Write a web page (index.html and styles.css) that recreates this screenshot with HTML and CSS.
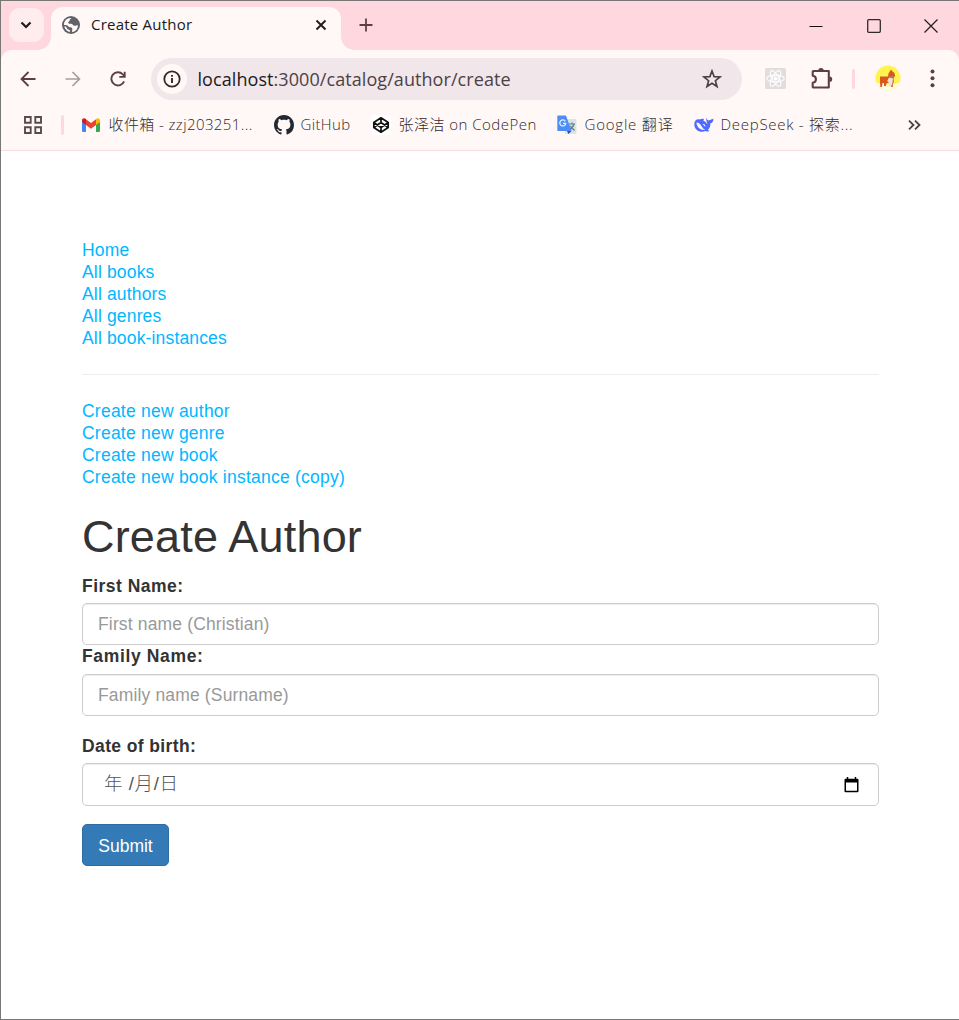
FILE: index.html
```html
<!DOCTYPE html>
<html lang="zh-CN">
<head>
<meta charset="utf-8">
<title>Create Author</title>
<link rel="stylesheet" href="styles.css">
</head>
<body>
<div class="window">
  <header class="tabstrip">
    <div class="tab-search"><svg width="12" height="8" viewBox="0 0 12 8"><path d="M1.500 1.500 6 6l4.500-4.500" fill="none" stroke="#201a1b" stroke-width="2.200"/></svg></div>
    <div class="tab">
      <svg class="favicon" width="18" height="18" viewBox="0 0 18 18"><circle cx="9" cy="9" r="9" fill="#5f6368"/><path d="M9.500 2c-2 1-1.500 3-3 4-1 .8.500 2 2 1.800 1.500-.3 2 .7 3 1.600 1 .8 2.800.3 4.300-.4.300 4-2.300 6.800-5.800 7-.3-1.500.8-2.500.2-3.700-.8-1.300-3-.5-4-2C5.300 8.800 3.200 9 2 9c-.2-4 3-7.500 7.500-7z" fill="#fff8f6"/><path d="M3 10.500c1 3 2.500 4 5 4.800" fill="none" stroke="#fff8f6" stroke-width="1.500"/></svg>
      <span class="tab-title">Create Author</span>
      <svg class="tab-close" width="12" height="12" viewBox="0 0 12 12"><path d="m1.500 1.500 9 9m0-9-9 9" stroke="#201a1b" stroke-width="1.900"/></svg>
    </div>
    <svg class="new-tab" width="14" height="14" viewBox="0 0 14 14"><path d="M7 .5v13M.5 7h13" stroke="#5c3f44" stroke-width="1.800"/></svg>
    <div class="controls">
      <svg width="14" height="14" viewBox="0 0 14 14"><path d="M.5 7.500h13" stroke="#111"/></svg>
      <svg width="14" height="14" viewBox="0 0 14 14"><rect x=".7" y=".7" width="12.600" height="12.600" rx="1" fill="none" stroke="#33292b" stroke-width="1.300"/></svg>
      <svg width="14" height="14" viewBox="0 0 14 14"><path d="m.5.500 13 13m0-13-13 13" stroke="#221c1d" stroke-width="1.200"/></svg>
    </div>
  </header>
  <div class="chrome">
    <div class="toolbar">
      <svg class="nav" width="16" height="16" viewBox="0 0 16 16"><path d="M15.500 8H2M8.500 1 1.500 8l7 7" fill="none" stroke="#5c3f44" stroke-width="1.800"/></svg>
      <svg class="nav" width="16" height="16" viewBox="0 0 16 16"><path d="M.5 8H14M7.500 1l7 7-7 7" fill="none" stroke="#a99a9c" stroke-width="1.600"/></svg>
      <svg class="nav" width="16" height="16" viewBox="0 0 16 16"><path d="M14.100 10.300A6.600 6.600 0 1 1 12.800 3.300L14.500 5" fill="none" stroke="#5c3f44" stroke-width="1.900"/><path d="M14.700.7v5.200H9.300" fill="none" stroke="#5c3f44" stroke-width="1.900"/></svg>
      <div class="omnibox">
        <div class="site-info"><svg width="18" height="18" viewBox="0 0 18 18"><circle cx="9" cy="9" r="7.700" fill="none" stroke="#33292b" stroke-width="1.800"/><path d="M9 8v5M9 5v1.800" stroke="#33292b" stroke-width="1.900"/></svg></div>
        <span class="url"><b>localhost</b>:3000/catalog/author/create</span>
        <svg width="20" height="20" viewBox="0 0 20 20"><path d="m10 2 2.100 5.600 6 .3-4.700 3.800 1.600 5.800L10 14.200l-5 3.300 1.600-5.800-4.700-3.800 6-.3z" fill="none" stroke="#4c4145" stroke-width="1.700"/></svg>
      </div>
      <svg class="react" width="21" height="21" viewBox="0 0 21 21"><rect width="21" height="21" rx="1.500" fill="#e1dddc"/><g fill="none" stroke="#fff" stroke-width="1.100"><ellipse cx="10.500" cy="10.500" rx="8.800" ry="3.400"/><ellipse cx="10.500" cy="10.500" rx="8.800" ry="3.400" transform="rotate(60 10.500 10.500)"/><ellipse cx="10.500" cy="10.500" rx="8.800" ry="3.400" transform="rotate(120 10.500 10.500)"/></g><circle cx="10.500" cy="10.500" r="2" fill="#fff"/></svg>
      <svg class="puzzle" width="22" height="22" viewBox="0 0 22 22"><path d="M2.500 3h15.300v16.500H2.500q-.8 0-.8-.8v-3.900c4.300-.5 4.300-6.600 0-7V3.800q0-.8.800-.8z" fill="none" stroke="#5c3f44" stroke-width="2.100" stroke-linejoin="round"/><path d="M7.300 2.500a2.700 2.500 0 0 1 5.400 0zM18.500 8.500a2.700 2.700 0 0 1 0 5.400z" fill="#5c3f44"/></svg>
      <i class="divider"></i>
      <svg class="avatar" width="26" height="26" viewBox="0 0 26 26"><defs><clipPath id="disc"><circle cx="13" cy="13" r="12.500"/></clipPath></defs><g clip-path="url(#disc)"><path d="M0 0h26v26H0z" fill="#fff34f"/><path d="M0 17q13 5 26 0v9H0z" fill="#fffbdc"/></g><path d="M5 11.500h8l.5-3L16 4.500l1.500 2L19.500 8l.5 3-1.500 2 .3 4-1 2v3h-1.600v-4h-4.500l-1 3H9v-3H7.500L7 22H5.400L5 17z" fill="#d8571f"/><path d="m14 12.500 4 1-.5 4.500-2 4h-1.800l.3-4-1.800-2z" fill="#eee2d2"/><path d="M14 12h4.500" stroke="#a8886e" stroke-width="1.500"/></svg>
      <svg class="menu" width="5" height="19" viewBox="0 0 5 19" fill="#5c3f44"><circle cx="2.500" cy="2.500" r="2"/><circle cx="2.500" cy="9.300" r="2"/><circle cx="2.500" cy="16.200" r="2"/></svg>
    </div>
    <nav class="bookmarks">
      <svg class="apps" width="18" height="18" viewBox="0 0 18 18" fill="none" stroke="#5a4a4c" stroke-width="1.900"><path d="M1 1h5.700v5.700H1zM11.300 1H17v5.700h-5.700zM1 11.300h5.700V17H1zM11.300 11.300H17V17h-5.700z"/></svg>
      <i class="divider"></i>
      <a class="bm gmail"><svg width="18" height="14" viewBox="0 0 18 14"><path d="M0 2h4v12H1.200Q0 14 0 12.800z" fill="#4285f4"/><path d="M14 2h4v10.800q0 1.200-1.200 1.200H14z" fill="#34a853"/><path d="M4 1.200 9 5l5-3.800V7L9 10.700 4 7z" fill="#ea4335"/><path d="M0 2.300C0 .2 2.200-.6 4 1v6L0 4z" fill="#c5221f"/><path d="M18 2.300C18 .2 15.800-.6 14 1v6l4-3z" fill="#fbbc04"/></svg><span>收件箱 - zzj203251...</span></a>
      <a class="bm github"><svg width="20" height="20" viewBox="0 0 16 16"><path fill="#24292f" d="M8 0C3.580 0 0 3.580 0 8c0 3.540 2.290 6.530 5.470 7.590.4.070.55-.17.55-.38 0-.19-.01-.82-.01-1.490-2.010.37-2.530-.49-2.690-.94-.09-.23-.48-.94-.82-1.130-.28-.15-.68-.52-.01-.53.63-.01 1.080.58 1.230.82.72 1.210 1.870.87 2.330.66.07-.52.28-.87.51-1.070-1.780-.2-3.640-.89-3.640-3.950 0-.87.31-1.590.82-2.150-.08-.2-.36-1.020.08-2.120 0 0 .67-.21 2.200.82.640-.18 1.320-.27 2-.27s1.360.09 2 .27c1.530-1.040 2.200-.82 2.200-.82.440 1.100.16 1.920.08 2.120.51.560.82 1.270.82 2.150 0 3.070-1.870 3.750-3.650 3.950.29.250.54.730.54 1.480 0 1.070-.01 1.930-.01 2.200 0 .21.15.46.55.38A8.010 8.010 0 0 0 16 8c0-4.420-3.580-8-8-8z"/></svg><span>GitHub</span></a>
      <a class="bm codepen"><svg width="20" height="20" viewBox="0 0 20 20"><path d="M0 0h20v20H0z" fill="#fff"/><path d="m10 2.800 7.200 4.700v5L10 17.200l-7.200-4.700v-5zM10 3v4.500M10 12.500V17M2.800 7.500l7.200 5 7.200-5M2.800 12.500l7.200-5 7.200 5" fill="none" stroke="#111" stroke-width="1.700" stroke-linejoin="round"/></svg><span>张泽洁 on CodePen</span></a>
      <a class="bm translate"><svg width="20" height="20" viewBox="0 0 20 20"><rect x="8" y="4" width="11.500" height="15" rx="1" fill="#dce3e3"/><path d="M12 9h6M15 7.500V9m2 0q-1 4-5 6m1-4 4.500 4.500" fill="none" stroke="#607d8b" stroke-width="1.200"/><path d="M1.200.5H9L14.500 16H1.200Q.3 16 .3 15V1.500Q.3.500 1.200.500z" fill="#4c8df6"/><path d="M10 16h4.500L11.500 19z" fill="#3048b8"/><path d="M8.300 6.300A3 3 0 1 0 8.600 9V8.400H6" fill="none" stroke="#e9f1ff" stroke-width="1.300"/></svg><span>Google 翻译</span></a>
      <a class="bm deepseek"><svg width="20" height="16" viewBox="0 0 20 16"><path d="M12.500.5c.3 2 1 2.700 2.300 3 .8-1 2.500-.6 4.600-1.700.2 2.800-1.400 4.400-3 4.500.2 3.200-1 5.200-2.500 6.500l1.300 1.200c-1.500.8-2.900.5-3.700.1C6.500 16 .3 13.500.3 7.200.3 3 3.300 1.500 6 2.500c1.500-.9 2.500-1 4-.4L9.300 3.400c1.600.8 3 2.200 4.200 3.900-.5-2.200-1.800-3.800-1-6.800z" fill="#4d6bfe"/><path d="M2.500 5.500c4.800 0 5 6.500 8.800 7-4.200 1.600-8.800-2.300-8.800-7zM8.500 7.200c1.500-1 3 .5 2.900 2.300-1.200-.2-1.500-1.700-2.900-2.300z" fill="#fff8f6"/></svg><span>DeepSeek - 探索...</span></a>
      <svg class="more" width="13" height="10" viewBox="0 0 13 10"><path d="m1 .7 4.500 4.300L1 9.300M7 .7l4.500 4.300L7 9.300" fill="none" stroke="#4c4145" stroke-width="1.800"/></svg>
    </nav>
  </div>
  <main class="page">
    <ul class="links"><li><a>Home</a></li><li><a>All books</a></li><li><a>All authors</a></li><li><a>All genres</a></li><li><a>All book-instances</a></li></ul>
    <hr>
    <ul class="links create"><li><a>Create new author</a></li><li><a>Create new genre</a></li><li><a>Create new book</a></li><li><a>Create new book instance (copy)</a></li></ul>
    <h1>Create Author</h1>
    <form>
      <label>First Name:</label>
      <input class="field" type="text" placeholder="First name (Christian)">
      <label class="family">Family Name:</label>
      <input class="field" type="text" placeholder="Family name (Surname)">
      <label class="birth">Date of birth:</label>
      <div class="field date"><span>年 /月/日</span><svg width="15" height="16" viewBox="0 0 15 16"><path d="M1.500 1.700h12q1 0 1 1v11.600q0 1-1 1h-12q-1 0-1-1V2.700q0-1 1-1zM2 5.500v8.300h11V5.500z" fill="#000" fill-rule="evenodd"/><path d="M3.500 0v2M11.500 0v2" stroke="#000" stroke-width="1.500"/></svg></div>
      <button type="button">Submit</button>
    </form>
  </main>
</div>
</body>
</html>
```
FILE: styles.css
```css
* { box-sizing: border-box; }
body { margin: 0; background: #fff; }
svg { display: block; flex: none; }
.window {
  width: 959px; height: 1020px; overflow: hidden;
  display: flex; flex-direction: column;
  border: 1px solid #777; border-right: 0;
}
.tabstrip { height: 49px; flex: none; display: flex; background: #ffd8df; }
.tab-search {
  width: 35px; height: 34px; margin: 7px 7px 0 8px; padding-right: 1px; border-radius: 11px;
  display: flex; align-items: center; justify-content: center; background: #ffecef;
}
.tab {
  position: relative; width: 290px; height: 43px; margin-top: 6px; padding: 0 14px 7px 11px;
  display: flex; align-items: center; background: #fff8f6; border-radius: 12px 12px 0 0;
}
.tab::before, .tab::after { content: ""; position: absolute; bottom: 0; width: 13px; height: 13px; }
.tab::before { left: -13px; background: radial-gradient(circle at 0 0, transparent 12.500px, #fff8f6 13px); }
.tab::after { right: -13px; background: radial-gradient(circle at 100% 0, transparent 12.500px, #fff8f6 13px); }
.tab-title { flex: 1; margin-left: 11px; padding-bottom: 2px; font: 15px/20px "Open Sans", "Noto Sans", sans-serif; letter-spacing: .22px; color: #201a1b; }
.new-tab { margin: 17px 0 0 18px; }
.controls { display: flex; gap: 43.500px; margin: 18px 21px 0 auto; width: 129px; }
.chrome { height: 101px; flex: none; background: linear-gradient(#ffd8df, #ffd8df) top / 100% 14px no-repeat; }
.toolbar {
  height: 57px; display: flex; align-items: center; padding-left: 19px;
  background: #fff8f6; border-radius: 11px 11px 0 0;
}
.nav { margin-right: 29px; }
.omnibox {
  width: 591px; height: 42px; margin-left: -4px; padding: 0 20px 0 6px;
  display: flex; align-items: center; border-radius: 21px; background: #f1e6ea;
}
.site-info { width: 30px; height: 30px; display: flex; align-items: center; justify-content: center; border-radius: 50%; background: #fff8f6; }
.url { flex: 1; margin-left: 10.500px; white-space: nowrap; font: 18px/24px "Open Sans", "Noto Sans", sans-serif; letter-spacing: .07px; color: #4c4145; }
.url b { font-weight: 400; color: #201a1b; }
.react { margin-left: 23px; }
.puzzle { margin-left: 25px; }
.divider { width: 3px; height: 20px; border-radius: 2px; background: #ffd8df; }
.toolbar .divider { margin-left: 19px; }
.avatar { margin-left: 20px; margin-bottom: 2px; }
.menu { margin-left: 29px; }
.bookmarks { height: 44px; display: flex; align-items: center; padding: 0 0 8px 22.500px; background: #fff8f6; border-bottom: 1px solid #f8dde0; }
.bookmarks .divider { margin: 0 18px 0 19px; }
.bm { display: flex; align-items: center; gap: 8px; white-space: nowrap; font: 15px/20px "Open Sans", "Noto Sans CJK SC", sans-serif; font-weight: 300; color: #33292b; }
.bm span { padding-bottom: 2px; }
.gmail { width: 192px; gap: 9px; letter-spacing: .4px; }
.github { width: 97px; gap: 7px; letter-spacing: .35px; }
.codepen { width: 186px; letter-spacing: .48px; }
.translate { width: 137px; letter-spacing: .8px; }
.deepseek { width: 214px; gap: 7px; letter-spacing: .72px; }
.page { padding: 88px 80px 0 81px; font: 17.500px/22px "Liberation Sans", Arial, sans-serif; color: #333; }
.links { list-style: none; margin: 0; padding: 0; color: #00b7ff; letter-spacing: .16px; }
.create { letter-spacing: .23px; }
hr { margin: 25px 0; border: 0; border-top: 1px solid #eee; }
h1 { margin: 24px 0 13px; font-size: 45px; line-height: 50px; font-weight: 400; letter-spacing: .18px; }
form { display: flex; flex-direction: column; align-items: flex-start; }
label { height: 22px; margin-bottom: 6px; font-weight: 700; letter-spacing: .48px; }
.field {
  width: 100%; height: 42px; padding: 0 15px; border: 1px solid #ccc; border-radius: 5px;
  box-shadow: inset 0 1px 1px rgba(0,0,0,.075); font: inherit; letter-spacing: .15px; color: #555; background: #fff;
}
.field::placeholder { color: #999; opacity: 1; }
.family { margin-bottom: 7px; letter-spacing: .64px; }
.birth { margin-top: 19px; letter-spacing: .38px; }
.date { height: 43px; padding: 0 19px 0 21px; display: flex; align-items: center; justify-content: space-between; font-family: "Liberation Sans", "Noto Sans CJK SC", sans-serif; font-size: 18.500px; font-weight: 300; letter-spacing: .6px; }
.date span { padding-bottom: 2px; }
button { width: 87px; height: 42px; margin-top: 18px; padding: 2px 0 0; border: 1px solid #2e6da4; border-radius: 5px; background: #337ab7; color: #fff; font: inherit; }
```
